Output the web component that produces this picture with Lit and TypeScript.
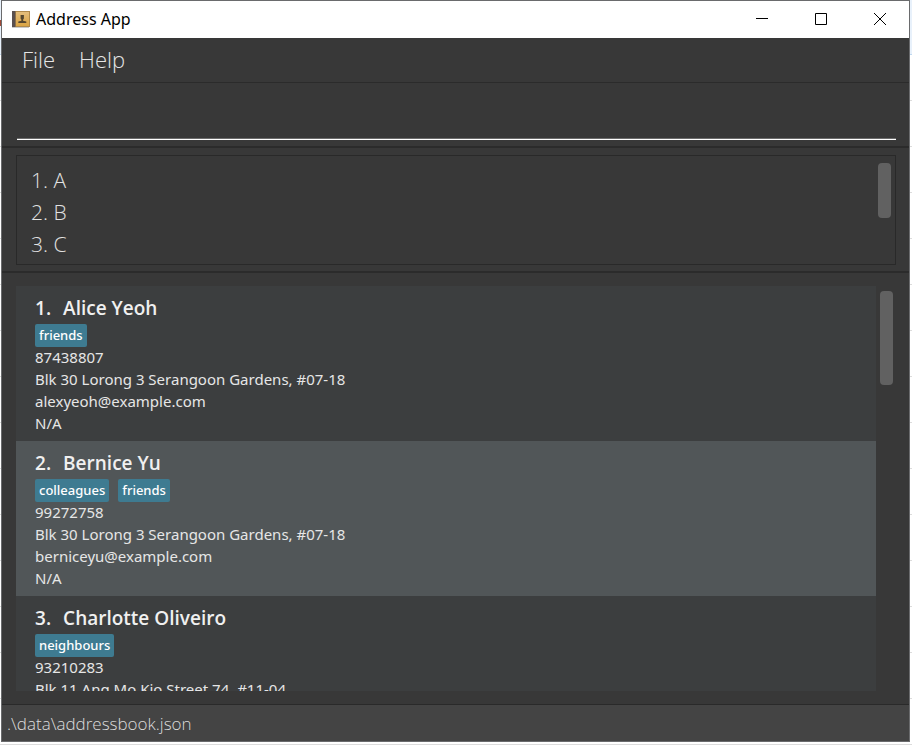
import { LitElement, html, css, svg, nothing } from "lit";
import { customElement, property, state } from "lit/decorators.js";
import { classMap } from "lit/directives/class-map.js";

interface Person {
  name: string;
  tags: string[];
  phone: string;
  address: string;
  email?: string;
  note?: string;
}

const PEOPLE: Person[] = [
  {
    name: "Alice Yeoh",
    tags: ["friends"],
    phone: "87438807",
    address: "Blk 30 Lorong 3 Serangoon Gardens, #07-18",
    email: "alexyeoh@example.com",
    note: "N/A",
  },
  {
    name: "Bernice Yu",
    tags: ["colleagues", "friends"],
    phone: "99272758",
    address: "Blk 30 Lorong 3 Serangoon Gardens, #07-18",
    email: "berniceyu@example.com",
    note: "N/A",
  },
  {
    name: "Charlotte Oliveiro",
    tags: ["neighbours"],
    phone: "93210283",
    address: "Blk 11 Ang Mo Kio Street 74, #11-04",
  },
];

const bookIcon = svg`
  <defs>
    <linearGradient id="cover" x1="0" y1="0" x2="0" y2="1">
      <stop offset="0" stop-color="#e3bd7c" />
      <stop offset="1" stop-color="#dba544" />
    </linearGradient>
  </defs>
  <rect x="0" y="16" width="17" height="1" fill="#c9c9c9" />
  <rect x="0" y="0" width="18" height="16" fill="#b08a4c" />
  <rect x="4" y="1" width="13" height="14" fill="url(#cover)" />
  <rect x="0" y="0" width="3" height="16" fill="#5a504e" />
  <rect x="3" y="0" width="1" height="16" fill="#8f7148" />
  <path d="M8.600 4h3.300v3.500l-.8 1.300v1l3.200.7v1.500h-8v-1.500l3.100-.7v-1l-.8-1.300z" fill="#54462f" />`;

@customElement("title-bar")
export class TitleBar extends LitElement {
  static styles = css`
    :host {
      display: flex;
      align-items: flex-start;
      height: 37px;
      flex: none;
      padding-left: 10px;
      background: #fff;
      color: #000;
    }
    .icon {
      width: 18px;
      height: 17px;
      margin: 10px 6px 0 0;
    }
    .title {
      flex: 1;
      margin: 0;
      font: 16px/36px "Noto Sans", sans-serif;
    }
    .control {
      width: 59px;
      height: 36px;
      padding: 0;
      border: 0;
      background: none;
      display: grid;
      place-items: center;
    }
    .control svg {
      fill: none;
      stroke: #000;
    }
  `;

  render() {
    return html`
      <svg class="icon" viewBox="0 0 18 17" aria-hidden="true">${bookIcon}</svg>
      <h1 class="title">Address App</h1>
      <button class="control" aria-label="Minimize">
        <svg width="12" height="12"><path d="M0 5.500h12" /></svg>
      </button>
      <button class="control" aria-label="Maximize">
        <svg width="12" height="12"><path d="M.5.5h11v11H.5z" /></svg>
      </button>
      <button class="control" aria-label="Close">
        <svg width="12" height="12"><path d="M0 0l12 12M12 0L0 12" /></svg>
      </button>
    `;
  }
}

@customElement("person-card")
export class PersonCard extends LitElement {
  @property({ attribute: false }) person!: Person;
  @property({ type: Number }) index = 0;

  static styles = css`
    :host {
      display: block;
      padding: 7px 19px;
      color: #e6e6e6;
      font: 15px/22px "Noto Sans", "Open Sans", sans-serif;
    }
    .name {
      display: flex;
      gap: 12px;
      margin: 0;
      padding-bottom: 1px;
      color: #f0f0f0;
      font: 600 19px/30px "Open Sans", sans-serif;
    }
    .tags {
      display: flex;
      gap: 9px;
    }
    .tag {
      padding: 0 4px;
      height: 23px;
      border-radius: 2px;
      background: #3e7b91;
      color: #fff;
      font: 500 13px/22px "Noto Sans", sans-serif;
    }
    .details {
      margin-top: -1px;
    }
    .line {
      margin: 0;
    }
  `;

  render() {
    const p = this.person;
    const line = (text?: string) => (text ? html`<p class="line">${text}</p>` : nothing);
    return html`
      <h2 class="name"><span>${this.index}.</span><span>${p.name}</span></h2>
      <div class="tags">${p.tags.map((t) => html`<span class="tag">${t}</span>`)}</div>
      <div class="details">${line(p.phone)}${line(p.address)}${line(p.email)}${line(p.note)}</div>
    `;
  }
}

@customElement("app-root")
export class AppRoot extends LitElement {
  @state() private command = "";

  static styles = css`
    :host {
      display: block;
      box-sizing: border-box;
      height: 100vh;
      padding: 0 2px 3px 1px;
      background:
        linear-gradient(#a04a38, #a04a38) 0 20px / 1px 6px no-repeat,
        linear-gradient(#e8f1fb 54px, #bfd8f0 54px 55px, transparent 55px),
        repeating-linear-gradient(#fff 0 8px, #dcdcdc 8px 9px, #fff 9px 46px);
      font-family: "Open Sans", sans-serif;
    }
    .window {
      box-sizing: border-box;
      height: 100%;
      display: flex;
      flex-direction: column;
      border: 1px solid #6a6b6d;
      background: #383838;
      color: #dedede;
    }
    .menu {
      display: flex;
      gap: 24px;
      height: 44px;
      flex: none;
      padding: 0 20px;
      border-bottom: 1px solid #2b2b2b;
    }
    .menu-item {
      height: 42px;
      padding: 0;
      border: 0;
      background: none;
      color: #e6e6e6;
      font: 300 22px/42px "Open Sans", sans-serif;
    }
    .command {
      flex: none;
      padding: 7px 13px 6px 15px;
      border-bottom: 2px solid #2b2b2b;
    }
    .command-input {
      display: block;
      box-sizing: border-box;
      width: 100%;
      height: 50px;
      padding: 0 4px;
      border: 0;
      border-bottom: 1px solid #fff;
      box-shadow: inset 0 -1px #6c6c6c;
      outline: 0;
      background: none;
      color: #fff;
      font: 300 22px/44px "Open Sans", sans-serif;
    }
    .result {
      flex: none;
      padding: 7px 13px 6px 14px;
      border-bottom: 2px solid #2b2b2b;
    }
    .result-box {
      display: flex;
      justify-content: space-between;
      height: 108px;
      border: 1px solid #292929;
      overflow: hidden;
    }
    .result-list {
      margin: 0;
      padding: 8px 14px;
      list-style: none;
      color: #e2e2e2;
      font: 300 21px/32px "Open Sans", sans-serif;
    }
    .list-area {
      flex: 1;
      min-height: 0;
      display: flex;
      padding: 13px 15px 13px 14px;
    }
    .people {
      flex: 1;
      margin: 0;
      padding: 0;
      list-style: none;
      overflow: hidden;
      background: #3c3e3f;
    }
    .person.selected {
      background: #515658;
    }
    .thumb {
      flex: none;
      width: 13px;
      border-radius: 4px;
      background: #616161;
    }
    .result-thumb {
      height: 55px;
      margin: 7px 4px;
    }
    .list-thumb {
      height: 94px;
      margin: 5px 1px 0 4px;
    }
    .status {
      flex: none;
      height: 36px;
      padding: 0 5px;
      border-top: 1px solid #2a2a2a;
      background: #444;
      color: #dcdcdc;
      font: 300 17px/37px "Open Sans", sans-serif;
    }
  `;

  render() {
    return html`
      <div class="window">
        <title-bar></title-bar>
        <nav class="menu">
          <button class="menu-item">File</button>
          <button class="menu-item">Help</button>
        </nav>
        <div class="command">
          <input
            class="command-input"
            aria-label="Command"
            .value=${this.command}
            @input=${(e: InputEvent) => (this.command = (e.target as HTMLInputElement).value)}
          />
        </div>
        <section class="result">
          <div class="result-box">
            <ul class="result-list">
              ${["A", "B", "C"].map((t, i) => html`<li>${i + 1}. ${t}</li>`)}
            </ul>
            <div class="thumb result-thumb"></div>
          </div>
        </section>
        <main class="list-area">
          <ul class="people">
            ${PEOPLE.map(
              (p, i) => html`<li class=${classMap({ person: true, selected: i % 2 === 1 })}>
                <person-card .person=${p} .index=${i + 1}></person-card>
              </li>`
            )}
          </ul>
          <div class="thumb list-thumb"></div>
        </main>
        <footer class="status">.\\data\\addressbook.json</footer>
      </div>
    `;
  }
}
